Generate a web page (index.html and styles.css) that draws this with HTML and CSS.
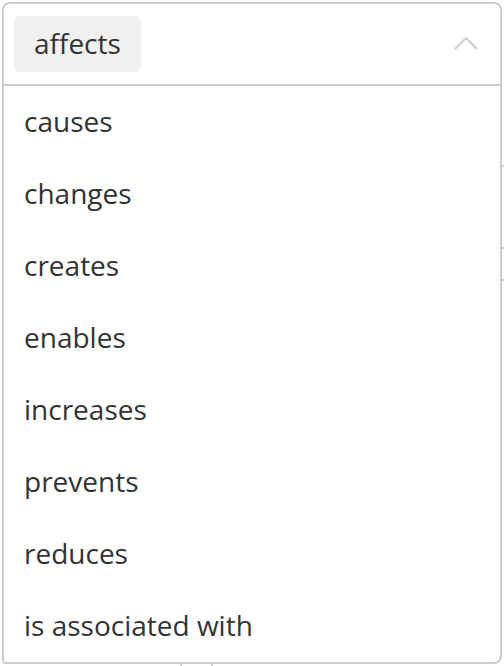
FILE: index.html
```html
<!DOCTYPE html>
<html lang="en">
<head>
<meta charset="utf-8">
<title>Relation select</title>
<link rel="stylesheet" href="styles.css">
</head>
<body>
  <div class="select">
    <div class="select-head">
      <span class="chip">affects</span>
      <svg class="chevron" width="24" height="14" viewBox="0 0 24 14" aria-hidden="true">
        <polyline points="1.5,12.5 12,2 22.5,12.5" fill="none" stroke="#cfcfcf" stroke-width="2.2" stroke-linecap="round" stroke-linejoin="round"/>
      </svg>
    </div>
    <ul class="options">
      <li class="option">causes</li>
      <li class="option">changes</li>
      <li class="option">creates</li>
      <li class="option">enables</li>
      <li class="option">increases</li>
      <li class="option">prevents</li>
      <li class="option">reduces</li>
      <li class="option">is associated with</li>
    </ul>
  </div>
</body>
</html>
```

FILE: styles.css
```css
html, body {
  height: 100%;
}

body {
  margin: 0;
  font-family: "Open Sans", "Noto Sans", sans-serif;
  color: #333;
  background-color: #fff;
  background-image:
    linear-gradient(#cfcfcf, #cfcfcf),
    linear-gradient(#cfcfcf, #cfcfcf),
    linear-gradient(#cfcfcf, #cfcfcf),
    linear-gradient(#cfcfcf, #cfcfcf),
    linear-gradient(#cfcfcf, #cfcfcf);
  background-size:
    300px 2px,
    300px 2px,
    300px 2px,
    2px 10px,
    2px 10px;
  background-position:
    204px 165px,
    204px 247px,
    204px 279px,
    180px 660px,
    211px 660px;
  background-repeat: no-repeat;
}

.select {
  box-sizing: border-box;
  width: 500px;
  height: 662px;
  margin: 2px 0 0 2px;
  border: 2px solid #cccccc;
  border-radius: 8px 8px 8px 3px;
  background: #fff;
  overflow: hidden;
}

.select-head {
  box-sizing: border-box;
  height: 82px;
  padding: 12px 22px 12px 10px;
  display: flex;
  align-items: center;
  justify-content: space-between;
  border-bottom: 2px solid #cccccc;
}

.chip {
  box-sizing: border-box;
  height: 56px;
  line-height: 54px;
  padding: 0 20px 2px;
  border-radius: 6px;
  background: #f1f1f1;
  font-size: 28px;
  color: #333;
}

.chevron {
  display: block;
  margin-top: -2px;
}

.options {
  list-style: none;
  margin: 0;
  padding: 0;
}

.option {
  box-sizing: border-box;
  height: 72px;
  line-height: 70px;
  padding: 0 20px 2px;
  font-size: 28px;
  white-space: nowrap;
}
```
